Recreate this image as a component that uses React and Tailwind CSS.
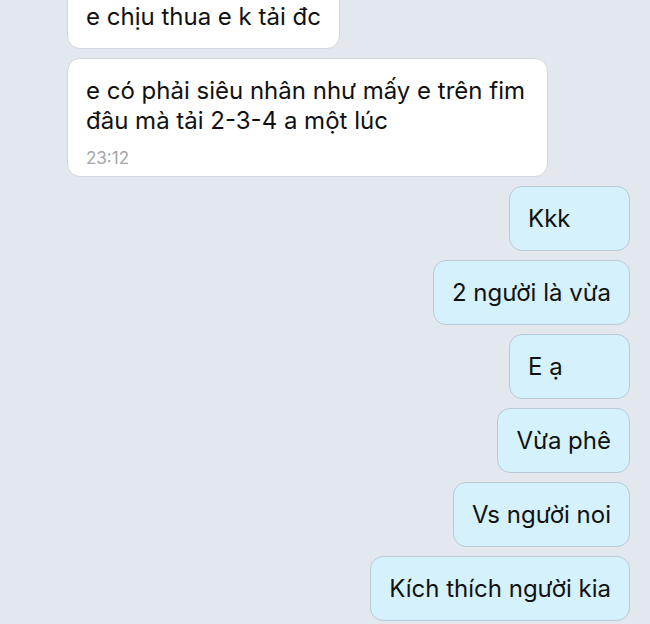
const incoming = [
  { id: 1, text: 'e chịu thua e k tải đc' },
]

const outgoing = ['Kkk', '2 người là vừa', 'E ạ', 'Vừa phê', 'Vs người noi', 'Kích thích người kia']

function Bubble({ mine, pad = 'pt-[17px] pb-[16px]', className = '', children }) {
  return (
    <div
      className={`rounded-[13px] border px-[18px] ${pad} text-[24px] leading-[30px] text-[#111111] ${
        mine
          ? 'self-end mr-[20px] min-w-[121px] border-[#b9cad6] bg-[#d4f1fc]'
          : 'self-start ml-[67px] border-[#d3d7dd] bg-white'
      } ${className}`}
    >
      {children}
    </div>
  )
}

export default function App() {
  return (
    <div
      className="h-[624px] w-full overflow-hidden bg-[#e3e8ef]"
      style={{ fontFamily: 'Inter, "Noto Sans", sans-serif' }}
    >
      <div className="mt-[-16px] flex flex-col gap-[9px]">
        {incoming.map((m) => (
          <Bubble key={m.id}>{m.text}</Bubble>
        ))}

        <Bubble pad="pt-[17px] pb-[8px]" className="w-[481px]">
          <p>
            e có phải siêu nhân như mấy e trên fim
            <br />
            đâu mà tải 2-3-4 a một lúc
          </p>
          <p className="mt-[12px] text-[17px] leading-[20px] text-[#a3a6aa]">23:12</p>
        </Bubble>

        {outgoing.map((t) => (
          <Bubble key={t} mine>
            {t}
          </Bubble>
        ))}
      </div>
    </div>
  )
}
